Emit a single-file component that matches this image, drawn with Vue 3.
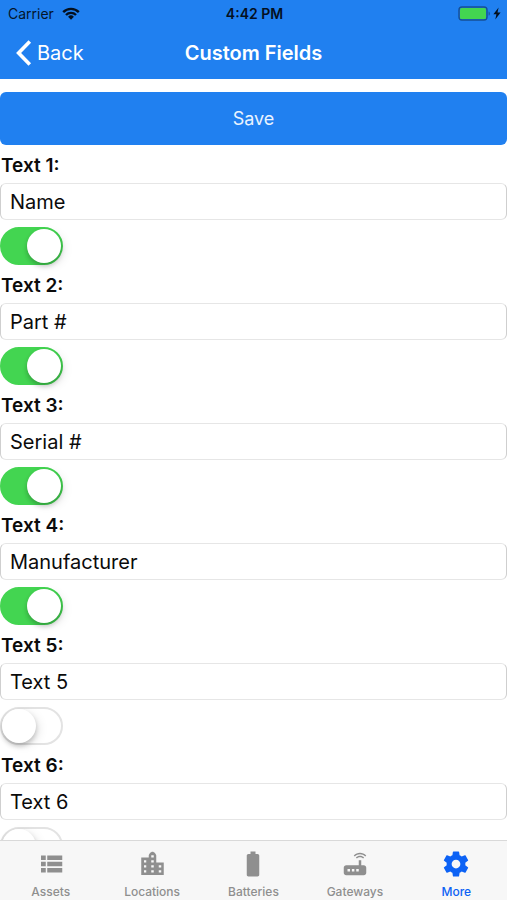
<script setup>
import { ref } from 'vue'

const fields = ref([
  { value: 'Name', enabled: true },
  { value: 'Part #', enabled: true },
  { value: 'Serial #', enabled: true },
  { value: 'Manufacturer', enabled: true },
  { value: 'Text 5', enabled: false },
  { value: 'Text 6', enabled: false }
])

const activeTab = ref('More')

const tabs = [
  {
    name: 'Assets',
    path: 'M4 13.8h3.8v-3.6H4v3.6zm0 5h3.8v-3.6H4v3.6zM4 8.8h3.8V5.2H4v3.6zm5 5h12v-3.6H9v3.6zm0 5h12v-3.6H9v3.6zM9 5.2v3.6h12V5.2H9z'
  },
  {
    name: 'Locations',
    path: 'M15.4 10.8V5.2c0-1-1.6-3-3-3s-3 2-3 3v1.6H3.4v14h18v-10h-6zm-8 8H5.6V17h1.8v1.8zm0-4H5.6V13h1.8v1.8zm0-4H5.6V9h1.8v1.8zm6 8h-2V17h2v1.8zm0-4h-2V13h2v1.8zm0-4h-2V9h2v1.8zm0-4h-2V5h2v1.8zm6 12h-2V17h2v1.8zm0-4h-2V13h2v1.8z'
  },
  {
    name: 'Batteries',
    path: 'M15.67 4H14V2h-4v2H8.33C7.6 4 7 4.6 7 5.33v15.33C7 21.4 7.6 22 8.33 22h7.33c.74 0 1.34-.6 1.34-1.33V5.33C17 4.6 16.4 4 15.67 4z'
  },
  {
    name: 'Gateways',
    path: 'M20.2 5.9l.8-.8C19.6 3.7 17.8 3 16 3s-3.6.7-5 2.1l.8.8C13 4.8 14.5 4.2 16 4.2s3 .6 4.2 1.7zm-.9.8c-.9-.9-2.1-1.4-3.3-1.4s-2.4.5-3.3 1.4l.8.8c.7-.7 1.6-1 2.5-1 .9 0 1.8.3 2.5 1l.8-.8zM19 13h-2V9h-2v4H5c-1.1 0-2 .9-2 2v4c0 1.1.9 2 2 2h14c1.1 0 2-.9 2-2v-4c0-1.1-.9-2-2-2zM8 18H6v-2h2v2zm3.5 0h-2v-2h2v2zm3.5 0h-2v-2h2v2z'
  },
  {
    name: 'More',
    path: 'M19.43 12.98c.04-.32.07-.64.07-.98s-.03-.66-.07-.98l2.11-1.65c.19-.15.24-.42.12-.64l-2-3.46c-.12-.22-.39-.3-.61-.22l-2.49 1c-.52-.4-1.08-.73-1.69-.98l-.38-2.65C14.46 2.18 14.25 2 14 2h-4c-.25 0-.46.18-.49.42l-.38 2.65c-.61.25-1.17.59-1.69.98l-2.49-1c-.23-.09-.49 0-.61.22l-2 3.46c-.13.22-.07.49.12.64l2.11 1.65c-.04.32-.07.65-.07.98s.03.66.07.98l-2.11 1.65c-.19.15-.24.42-.12.64l2 3.46c.12.22.39.3.61.22l2.49-1c.52.4 1.08.73 1.69.98l.38 2.65c.03.24.24.42.49.42h4c.25 0 .46-.18.49-.42l.38-2.65c.61-.25 1.17-.59 1.69-.98l2.49 1c.23.09.49 0 .61-.22l2-3.46c.12-.22.07-.49-.12-.64l-2.11-1.65zM12 15.5c-1.93 0-3.5-1.57-3.5-3.5s1.57-3.5 3.5-3.5 3.5 1.57 3.5 3.5-1.57 3.5-3.5 3.5z'
  }
]
</script>

<template>
  <div class="screen">
    <header class="header">
      <div class="status">
        <div class="carrier">
          <span>Carrier</span>
          <svg class="wifi" viewBox="0 0 18 13" aria-hidden="true">
            <path d="M1.2 5.1a11 11 0 0 1 15.6 0" />
            <path d="M4 8a7 7 0 0 1 10 0" />
            <path class="solid" d="M9 12.7l-2.9-2.9a4.1 4.1 0 0 1 5.8 0z" />
          </svg>
        </div>
        <span class="time">4:42 PM</span>
        <div class="power">
          <svg class="battery" viewBox="0 0 33 15" aria-hidden="true">
            <rect class="case" x="1" y="1" width="28" height="13" rx="3" />
            <rect class="charge" x="2" y="2" width="26" height="11" rx="1.5" />
            <path class="tip" d="M30.6 5.4c1.6.5 1.6 3.7 0 4.2z" />
          </svg>
          <svg class="bolt" viewBox="0 0 8 13" aria-hidden="true">
            <path d="M5.6.6L.4 7.2h3L2.3 12.4 7.6 5.6H4.5z" />
          </svg>
        </div>
      </div>
      <nav class="nav">
        <a class="back" href="#back">
          <svg class="chevron" viewBox="0 0 16 26" aria-hidden="true">
            <path d="M13.8 1.6L2.6 13l11.2 11.4" />
          </svg>
          <span>Back</span>
        </a>
        <h1 class="title">Custom Fields</h1>
      </nav>
    </header>

    <main class="content">
      <button class="save" type="button">Save</button>
      <div v-for="(field, i) in fields" :key="i" class="field">
        <label :id="`label-${i}`" class="label" :for="`field-${i}`">Text {{ i + 1 }}:</label>
        <input :id="`field-${i}`" v-model="field.value" class="text" type="text" />
        <input
          v-model="field.enabled"
          class="toggle"
          type="checkbox"
          role="switch"
          :aria-labelledby="`label-${i}`"
        />
      </div>
    </main>

    <nav class="tabs">
      <a
        v-for="tab in tabs"
        :key="tab.name"
        class="tab"
        :class="{ active: tab.name === activeTab }"
        :href="`#${tab.name.toLowerCase()}`"
        @click="activeTab = tab.name"
      >
        <svg class="icon" viewBox="0 0 24 24" aria-hidden="true"><path :d="tab.path" /></svg>
        <span>{{ tab.name }}</span>
      </a>
    </nav>
  </div>
</template>

<style>
body {
  margin: 0;
  background: #fff;
}
</style>

<style scoped>
.screen {
  display: flex;
  flex-direction: column;
  height: 100vh;
  overflow: hidden;
  background: #fff;
  color: #0b0b0b;
  font-family: Inter, "Liberation Sans", sans-serif;
}

.header {
  flex: none;
  background: #2080f0;
}

.status,
.nav {
  display: grid;
  grid-template-columns: 1fr auto 1fr;
  align-items: center;
}

.status {
  height: 27px;
  padding: 0 6px 0 8px;
  color: #04152b;
  font-size: 14px;
}

.carrier,
.power {
  display: flex;
  align-items: center;
}

.carrier {
  gap: 8px;
}

.power {
  justify-content: flex-end;
  gap: 2px;
}

.time {
  color: #04101f;
  font-size: 14px;
  font-weight: 600;
}

.wifi {
  width: 18px;
  height: 13px;
  fill: none;
  stroke: #04101f;
  stroke-width: 2.4;
}

.wifi .solid {
  fill: #04101f;
  stroke: none;
}

.battery {
  width: 33px;
  height: 15px;
}

.case {
  fill: none;
  stroke: #164f94;
  stroke-width: 1.4;
}

.charge {
  fill: #43d551;
}

.tip {
  fill: #164f94;
}

.bolt {
  width: 8px;
  height: 13px;
  fill: #04101f;
}

.nav {
  height: 52px;
  padding: 0 16px;
}

.back {
  display: flex;
  align-items: center;
  gap: 5px;
  color: #fff;
  font-size: 20px;
  text-decoration: none;
}

.chevron {
  width: 16px;
  height: 26px;
  fill: none;
  stroke: #fff;
  stroke-width: 3.6;
}

.title {
  margin: 0;
  color: #fff;
  font-size: 20px;
  font-weight: 600;
}

.content {
  flex: 1;
  min-height: 0;
  overflow: hidden;
  padding-top: 13px;
}

.save {
  display: block;
  width: 100%;
  height: 53px;
  margin: 0 0 2px;
  border: 0;
  border-radius: 6px;
  background: #2080f0;
  color: #e9f3ff;
  font: 18px Inter, "Liberation Sans", sans-serif;
}

.field {
  display: flex;
  flex-direction: column;
  align-items: flex-start;
  padding-bottom: 2px;
}

.label {
  padding: 2px 0 0 1px;
  font-size: 19px;
  font-weight: 600;
  line-height: 34px;
}

.text {
  box-sizing: border-box;
  width: 100%;
  height: 37px;
  padding: 0 9px;
  border: 1px solid #e6e6e6;
  border-right-color: #cfcfcf;
  border-left-color: #cfcfcf;
  border-radius: 6px;
  background: #fff;
  color: #0b0b0b;
  font: 20px Inter, "Liberation Sans", sans-serif;
}

.toggle {
  appearance: none;
  box-sizing: border-box;
  display: flex;
  width: 63px;
  height: 38px;
  margin: 7px 0 0;
  padding: 0;
  border: 2px solid #e3e3e3;
  border-radius: 19px;
  background: #fff;
}

.toggle::before {
  content: "";
  width: 34px;
  height: 34px;
  border-radius: 50%;
  background: #fff;
  box-shadow: 0 3px 5px rgba(0, 0, 0, 0.22), 4px 3px 10px rgba(0, 0, 0, 0.08);
}

.toggle:checked {
  justify-content: flex-end;
  border-color: #43d551;
  background: #43d551;
}

.tabs {
  flex: none;
  display: grid;
  grid-template-columns: repeat(5, 1fr);
  height: 59px;
  border-top: 1px solid #d9d9d9;
  background: #f7f7f7;
}

.tab {
  display: flex;
  flex-direction: column;
  align-items: center;
  gap: 5px;
  padding-top: 8px;
  color: #8f8f8f;
  font-size: 12px;
  font-weight: 500;
  line-height: 16px;
  text-decoration: none;
}

.tab.active {
  color: #0c62f5;
}

.icon {
  width: 30px;
  height: 30px;
  fill: currentColor;
}
</style>
